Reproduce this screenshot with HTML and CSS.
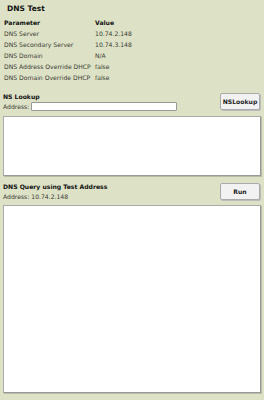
FILE: index.html
```html
<!DOCTYPE html>
<html lang="en">
<head>
    <meta charset="UTF-8">
    <meta name="viewport" content="width=device-width, initial-scale=1.0">
    <title>DNS Test</title>
    <link rel="stylesheet" href="styles.css">
</head>
<body>
    <div class="page">
        <h1 class="title">DNS Test</h1>
        <table class="info">
            <tr><th>Parameter</th><th>Value</th></tr>
            <tr><td>DNS Server</td><td>10.74.2.148</td></tr>
            <tr><td>DNS Secondary Server</td><td>10.74.3.148</td></tr>
            <tr><td>DNS Domain</td><td>N/A</td></tr>
            <tr><td>DNS Address Override DHCP</td><td>false</td></tr>
            <tr><td>DNS Domain Override DHCP</td><td>false</td></tr>
        </table>

        <div class="section first">
            <div class="head">
                <div class="left">
                    <h2>NS Lookup</h2>
                    <label class="addr">Address: <input type="text"></label>
                </div>
                <button class="btn">NSLookup</button>
            </div>
            <textarea class="out small"></textarea>
        </div>

        <div class="section">
            <div class="head">
                <div class="left">
                    <h2>DNS Query using Test Address</h2>
                    <div class="addr">Address: 10.74.2.148</div>
                </div>
                <button class="btn run">Run</button>
            </div>
            <textarea class="out big"></textarea>
        </div>
    </div>
</body>
</html>
```
FILE: styles.css
```css
*{
    margin: 0;
    padding: 0;
    box-sizing: border-box;
}
body{
    background-color: #dde2c6;
    font-family: "DejaVu Sans", Verdana, sans-serif;
    font-size: 6.1px;
    color: #3a3a32;
}
.page{
    width: 264px;
    height: 400px;
    padding: 0 3px;
}
.title{
    font-size: 7.5px;
    font-weight: bold;
    color: #111;
    line-height: 9px;
    padding: 4px 4px 0;
    height: 17px;
}
.info{
    border-collapse: collapse;
}
.info th,.info td{
    text-align: left;
    height: 11px;
    line-height: 11px;
    padding: 0 0 0 1px;
    white-space: nowrap;
}
.info th{
    color: #111;
    font-weight: bold;
}
.info td:first-child,.info th:first-child{
    width: 91px;
}
.section{
    margin-top: 7px;
}
.section.first{
    margin-top: 10px;
}
.head{
    display: flex;
    justify-content: space-between;
    align-items: flex-start;
    height: 17px;
}
.head h2{
    font-size: 6.1px;
    font-weight: bold;
    color: #111;
    line-height: 7px;
}
.addr{
    display: flex;
    align-items: center;
    height: 10px;
    margin-top: 1px;
}
.addr input{
    width: 146px;
    height: 9px;
    margin-left: 2px;
    border: 1px solid #999;
    border-radius: 1px;
    background: #fff;
}
.btn{
    width: 40px;
    height: 17px;
    font-family: "DejaVu Sans", Verdana, sans-serif;
    font-size: 6.1px;
    font-weight: bold;
    color: #222;
    background-color: #f2f2f2;
    border: 1px solid #aaa;
    border-radius: 2px;
    box-shadow: 1px 1px 0 #bbb;
    margin-right: 1px;
}
.out{
    display: block;
    width: 258px;
    background: #fff;
    border: 1px solid #aaa;
    border-right-color: #999;
    border-bottom-color: #999;
    box-shadow: 1px 1px 0 #b8bca4;
    resize: none;
}
.small{
    height: 60px;
    margin-top: 6px;
}
.big{
    height: 188px;
    margin-top: 5px;
}
```
